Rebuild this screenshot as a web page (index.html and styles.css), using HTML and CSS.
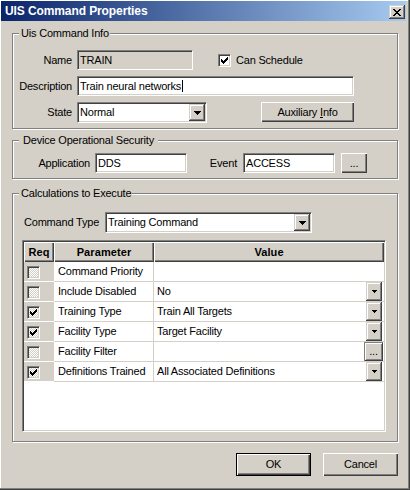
FILE: index.html
```html
<!DOCTYPE html>
<html>
<head>
<meta charset="utf-8">
<title>UIS Command Properties</title>
<link rel="stylesheet" href="styles.css">
</head>
<body>
<div class="window">
  <div class="titlebar">
    <span class="title">UIS Command Properties</span>
    <span class="capbtn"><svg width="8" height="7" viewBox="0 0 8 7" shape-rendering="crispEdges"><path fill="#000" d="M0 0h2v1h-2z M6 0h2v1h-2z M1 1h2v1h-2z M5 1h2v1h-2z M2 2h4v1h-4z M3 3h2v1h-2z M2 4h4v1h-4z M1 5h2v1h-2z M5 5h2v1h-2z M0 6h2v1h-2z M6 6h2v1h-2z"/></svg></span>
  </div>
  <div class="client">
    <section class="group g1">
      <span class="cap">Uis Command Info</span>
      <div class="row h20">
        <span class="lbl l-g1">Name</span>
        <span class="edit ro w-name">TRAIN</span>
        <span class="chk">
          <span class="box"><svg width="7" height="7" viewBox="0 0 7 7" shape-rendering="crispEdges"><path fill="#000" d="M0 2h1v1h1v1h1v-1h1v-1h1v-1h1v-1h1v3h-1v1h-1v1h-1v1h-1v1h-1v-1h-1v-1h-1z"/></svg></span>
          <span class="chk-text">Can Schedule</span>
        </span>
      </div>
      <div class="row h20">
        <span class="lbl l-g1">Description</span>
        <span class="edit w-desc">Train neural networks<span class="caret"></span></span>
      </div>
      <div class="row h21">
        <span class="lbl l-g1">State</span>
        <span class="combo w-state">
          <span class="val">Normal</span>
          <span class="dd"><svg width="7" height="4" viewBox="0 0 7 4" shape-rendering="crispEdges"><path fill="#000" d="M0 0h7v1h-1v1h-1v1h-1v1h-1v-1h-1v-1h-1v-1h-1z"/></svg></span>
        </span>
        <button class="btn aux">Auxiliary <u>I</u>nfo</button>
      </div>
    </section>

    <section class="group g2">
      <span class="cap cap-wide">Device Operational Security</span>
      <div class="row h20">
        <span class="lbl l-app">Application</span>
        <span class="edit w-92">DDS</span>
        <span class="lbl l-ev">Event</span>
        <span class="edit w-92">ACCESS</span>
        <button class="btn ell">...</button>
      </div>
    </section>

    <section class="group g3">
      <span class="cap">Calculations to Execute</span>
      <div class="row h21">
        <span class="lbl l-ct">Command Type</span>
        <span class="combo w-ct">
          <span class="val">Training Command</span>
          <span class="dd"><svg width="7" height="4" viewBox="0 0 7 4" shape-rendering="crispEdges"><path fill="#000" d="M0 0h7v1h-1v1h-1v1h-1v1h-1v-1h-1v-1h-1v-1h-1z"/></svg></span>
        </span>
      </div>
      <div class="grid">
        <div class="gr gh">
          <div class="hc">Req</div>
          <div class="hc">Parameter</div>
          <div class="hc">Value</div>
        </div>
        <div class="gr gd">
          <div class="c-req"><span class="rbox"></span></div>
          <div class="c-par">Command Priority</div>
          <div class="c-val"><span class="vt"></span></div>
        </div>
        <div class="gr gd">
          <div class="c-req"><span class="rbox"></span></div>
          <div class="c-par">Include Disabled</div>
          <div class="c-val"><span class="vt">No</span><span class="mdd"><svg width="5" height="3" viewBox="0 0 5 3" shape-rendering="crispEdges"><path fill="#000" d="M0 0h5v1h-1v1h-1v1h-1v-1h-1v-1h-1z"/></svg></span></div>
        </div>
        <div class="gr gd">
          <div class="c-req"><span class="rbox"><svg width="7" height="7" viewBox="0 0 7 7" shape-rendering="crispEdges"><path fill="#000" d="M0 2h1v1h1v1h1v-1h1v-1h1v-1h1v-1h1v3h-1v1h-1v1h-1v1h-1v1h-1v-1h-1v-1h-1z"/></svg></span></div>
          <div class="c-par">Training Type</div>
          <div class="c-val"><span class="vt">Train All Targets</span><span class="mdd"><svg width="5" height="3" viewBox="0 0 5 3" shape-rendering="crispEdges"><path fill="#000" d="M0 0h5v1h-1v1h-1v1h-1v-1h-1v-1h-1z"/></svg></span></div>
        </div>
        <div class="gr gd">
          <div class="c-req"><span class="rbox"><svg width="7" height="7" viewBox="0 0 7 7" shape-rendering="crispEdges"><path fill="#000" d="M0 2h1v1h1v1h1v-1h1v-1h1v-1h1v-1h1v3h-1v1h-1v1h-1v1h-1v1h-1v-1h-1v-1h-1z"/></svg></span></div>
          <div class="c-par">Facility Type</div>
          <div class="c-val"><span class="vt">Target Facility</span><span class="mdd"><svg width="5" height="3" viewBox="0 0 5 3" shape-rendering="crispEdges"><path fill="#000" d="M0 0h5v1h-1v1h-1v1h-1v-1h-1v-1h-1z"/></svg></span></div>
        </div>
        <div class="gr gd">
          <div class="c-req"><span class="rbox"></span></div>
          <div class="c-par">Facility Filter</div>
          <div class="c-val"><span class="vt"></span><span class="mell">...</span></div>
        </div>
        <div class="gr gd">
          <div class="c-req"><span class="rbox"><svg width="7" height="7" viewBox="0 0 7 7" shape-rendering="crispEdges"><path fill="#000" d="M0 2h1v1h1v1h1v-1h1v-1h1v-1h1v-1h1v3h-1v1h-1v1h-1v1h-1v1h-1v-1h-1v-1h-1z"/></svg></span></div>
          <div class="c-par">Definitions Trained</div>
          <div class="c-val"><span class="vt">All Associated Definitions</span><span class="mdd"><svg width="5" height="3" viewBox="0 0 5 3" shape-rendering="crispEdges"><path fill="#000" d="M0 0h5v1h-1v1h-1v1h-1v-1h-1v-1h-1z"/></svg></span></div>
        </div>
      </div>
    </section>

    <div class="btns">
      <button class="btn b75 default">OK</button>
      <button class="btn b75">Cancel</button>
    </div>
  </div>
</div>
</body>
</html>
```

FILE: styles.css
```css
* { box-sizing: border-box; }
html, body { margin: 0; padding: 0; }
body {
  width: 410px;
  height: 490px;
  overflow: hidden;
  font-family: "Liberation Sans", Arial, sans-serif;
  font-size: 11px;
  letter-spacing: -0.2px;
  color: #000;
  background: #d4d0c8;
}
button {
  font: inherit;
  letter-spacing: inherit;
  color: inherit;
  margin: 0;
  padding: 0;
  border: 0;
  background: none;
}

.window {
  width: 410px;
  height: 490px;
  background: #d4d0c8;
  padding-top: 1px;
  box-shadow: inset -1px -1px #404040, inset -2px -2px #808080, inset 1px 1px #fff;
}

.titlebar {
  height: 20px;
  margin: 0 4px 0 1px;
  padding-left: 4px;
  background: linear-gradient(to right, #0a246a, #a6caf0);
  display: flex;
  justify-content: space-between;
  align-items: flex-start;
}
.title {
  color: #fff;
  font-weight: bold;
  font-size: 12px;
  letter-spacing: -0.1px;
  line-height: 20px;
}
.capbtn {
  width: 16px;
  height: 14px;
  margin: 4px 1px 0 0;
  background: #d4d0c8;
  box-shadow: inset -1px -1px #404040, inset 1px 1px #d4d0c8, inset -2px -2px #808080, inset 2px 2px #fff;
  display: flex;
  align-items: center;
  justify-content: center;
}

.client { padding: 0 12px; }

.group {
  position: relative;
  border: 1px solid #808080;
  box-shadow: inset 1px 1px #fff, 1px 1px #fff;
}
.cap {
  position: absolute;
  top: -7px;
  left: 6px;
  padding: 0 1px 0 2px;
  line-height: 13px;
  background: #d4d0c8;
  white-space: nowrap;
}
.cap-wide { padding: 0 4px; }

.g1 { margin-top: 12px; padding: 16px 0 5px; }
.g1 .row + .row { margin-top: 6px; }
.g2 { margin-top: 11px; padding: 12px 0 5px; }
.g3 { margin-top: 14px; padding: 18px 11px 9px 9px; }

.row { display: flex; align-items: center; }
.h20 { height: 20px; }
.h21 { height: 21px; align-items: flex-start; }

.lbl { white-space: nowrap; line-height: 20px; }
.l-g1 { width: 59px; margin-right: 5px; text-align: right; }
.l-app { width: 77px; margin-right: 5px; text-align: right; }
.l-ev { width: 50px; margin-right: 6px; text-align: right; }
.l-ct { width: 83px; padding-left: 2px; line-height: 21px; }

.edit {
  height: 20px;
  border: 1px solid;
  border-color: #808080 #fff #fff #808080;
  box-shadow: inset 1px 1px #404040, inset -1px -1px #d4d0c8;
  background: #fff;
  padding-left: 2px;
  line-height: 18px;
  white-space: nowrap;
  overflow: hidden;
}
.edit.ro { background: #d4d0c8; }
.w-name { width: 116px; }
.w-desc { width: 277px; }
.w-92 { width: 92px; }
.caret {
  display: inline-block;
  width: 1px;
  height: 12px;
  background: #000;
  vertical-align: -2px;
  margin-left: 1px;
}

.chk { display: flex; align-items: center; margin-left: 25px; }
.box {
  width: 13px;
  height: 13px;
  border: 1px solid;
  border-color: #808080 #fff #fff #808080;
  box-shadow: inset 1px 1px #404040, inset -1px -1px #d4d0c8;
  background: #fff;
  display: flex;
  align-items: center;
  justify-content: center;
}
.chk-text { margin-left: 5px; white-space: nowrap; }

.combo {
  display: flex;
  height: 21px;
  padding: 1px;
  border: 1px solid;
  border-color: #808080 #fff #fff #808080;
  box-shadow: inset 1px 1px #404040, inset -1px -1px #d4d0c8;
  background: #fff;
}
.combo .val { flex: 1; padding-left: 1px; line-height: 17px; white-space: nowrap; }
.combo .dd {
  width: 16px;
  height: 17px;
  background: #d4d0c8;
  box-shadow: inset -1px -1px #404040, inset 1px 1px #d4d0c8, inset -2px -2px #808080, inset 2px 2px #fff;
  display: flex;
  align-items: center;
  justify-content: center;
}
.w-state { width: 130px; }
.w-ct { width: 207px; }

.btn {
  background: #d4d0c8;
  box-shadow: inset 1px 1px #fff, inset -1px -1px #404040, inset -2px -2px #808080;
  text-align: center;
  white-space: nowrap;
}
.aux { width: 93px; height: 20px; margin-left: 54px; line-height: 20px; }
.ell { width: 26px; height: 20px; margin-left: 6px; line-height: 20px; }

.grid {
  width: 364px;
  height: 192px;
  margin-top: 7px;
  padding: 1px;
  border: 1px solid;
  border-color: #808080 #fff #fff #808080;
  box-shadow: inset 1px 1px #404040, inset -1px -1px #d4d0c8;
  background: #fff;
}
.gr { display: grid; grid-template-columns: 30px 100px 230px; }
.hc {
  height: 20px;
  background: #d4d0c8;
  box-shadow: inset 1px 1px #fff, inset -1px -1px #404040, inset -2px -2px #808080;
  font-weight: bold;
  letter-spacing: 0.1px;
  text-align: center;
  line-height: 20px;
}
.gd { height: 20px; }
.c-req {
  background: #d4d0c8;
  border-bottom: 1px solid #fff;
  padding: 4px 0 0 3px;
}
.rbox {
  width: 13px;
  height: 13px;
  border: 1px solid;
  border-color: #808080 #fff #fff #808080;
  box-shadow: inset 1px 1px #404040, inset -1px -1px #d4d0c8;
  background-color: #fff;
  background-image: repeating-conic-gradient(#fff 0 25%, #d4d0c8 0 50%);
  background-size: 2px 2px;
  display: flex;
  align-items: center;
  justify-content: center;
}
.c-par {
  border-right: 1px solid #d4d0c8;
  border-bottom: 1px solid #d4d0c8;
  padding-left: 4px;
  line-height: 19px;
  white-space: nowrap;
}
.c-val {
  border-bottom: 1px solid #d4d0c8;
  display: flex;
  align-items: flex-start;
  padding-left: 3px;
}
.vt { flex: 1; line-height: 19px; white-space: nowrap; }
.mdd {
  width: 16px;
  height: 19px;
  margin-right: 2px;
  background: #d4d0c8;
  box-shadow: inset -1px -1px #404040, inset 1px 1px #d4d0c8, inset -2px -2px #808080, inset 2px 2px #fff;
  display: flex;
  align-items: center;
  justify-content: center;
}
.mell {
  width: 19px;
  height: 19px;
  margin-right: 1px;
  background: #d4d0c8;
  box-shadow: inset 1px 1px #808080, inset -1px -1px #404040, inset 2px 2px #fff, inset -2px -2px #808080;
  text-align: center;
  line-height: 19px;
}

.btns {
  display: flex;
  justify-content: flex-end;
  gap: 12px;
  margin-top: 11px;
}
.b75 { width: 75px; height: 23px; line-height: 23px; }
.default {
  border: 1px solid #000;
  line-height: 21px;
}
```
